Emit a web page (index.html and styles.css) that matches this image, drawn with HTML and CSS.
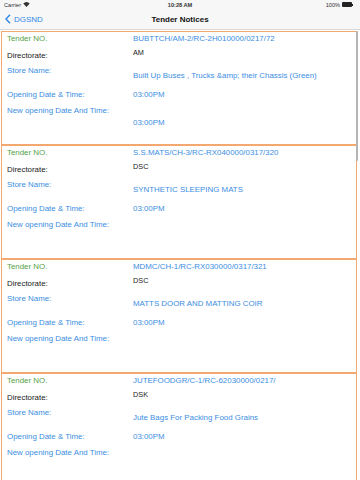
FILE: index.html
```html
<!DOCTYPE html>
<html>
<head>
    <meta http-equiv="Content-Type" content="text/html; charset=utf-8"/>
    <title>Tender Notices</title>
    <link rel="stylesheet" href="styles.css">
</head>
<body>
<div class="statusbar">
    <span class="carrier">Carrier
        <svg class="wifi" width="7" height="5" viewBox="0 0 14 10">
            <path d="M7 10 L0.5 3.2 A9.5 9.5 0 0 1 13.5 3.2 Z" fill="#333"/>
        </svg>
    </span>
    <span class="clock">10:28 AM</span>
    <span class="battery">100%
        <span class="batt-body"></span><span class="batt-tip"></span>
    </span>
</div>
<div class="navbar">
    <a class="back">
        <svg width="6" height="10" viewBox="0 0 6 10">
            <polyline points="5,0.8 1,5 5,9.2" fill="none" stroke="#2f86e8" stroke-width="1.4"/>
        </svg>
        DGSND
    </a>
    <span class="title">Tender Notices</span>
</div>

<div class="list">
    <div class="card">
        <div class="col labels">
            <div class="tno">Tender NO.</div>
            <div class="dir">Directorate:</div>
            <div class="store">Store Name:</div>
            <div class="open">Opening Date &amp; Time:</div>
            <div class="newopen">New opening Date And Time:</div>
        </div>
        <div class="col values">
            <div class="v-tno">BUBTTCH/AM-2/RC-2H010000/0217/72</div>
            <div class="v-dir">AM</div>
            <div class="v-store">Built Up Buses , Trucks &amp;amp; their Chassis (Green)</div>
            <div class="v-open">03:00PM</div>
            <div class="v-newopen">03:00PM</div>
        </div>
    </div>
    <div class="card">
        <div class="col labels">
            <div class="tno">Tender NO.</div>
            <div class="dir">Directorate:</div>
            <div class="store">Store Name:</div>
            <div class="open">Opening Date &amp; Time:</div>
            <div class="newopen">New opening Date And Time:</div>
        </div>
        <div class="col values">
            <div class="v-tno">S.S.MATS/CH-3/RC-RX040000/0317/320</div>
            <div class="v-dir">DSC</div>
            <div class="v-store">SYNTHETIC SLEEPING MATS</div>
            <div class="v-open">03:00PM</div>
        </div>
    </div>
    <div class="card">
        <div class="col labels">
            <div class="tno">Tender NO.</div>
            <div class="dir">Directorate:</div>
            <div class="store">Store Name:</div>
            <div class="open">Opening Date &amp; Time:</div>
            <div class="newopen">New opening Date And Time:</div>
        </div>
        <div class="col values">
            <div class="v-tno">MDMC/CH-1/RC-RX030000/0317/321</div>
            <div class="v-dir">DSC</div>
            <div class="v-store">MATTS DOOR AND MATTING COIR</div>
            <div class="v-open">03:00PM</div>
        </div>
    </div>
    <div class="card">
        <div class="col labels">
            <div class="tno">Tender NO.</div>
            <div class="dir">Directorate:</div>
            <div class="store">Store Name:</div>
            <div class="open">Opening Date &amp; Time:</div>
            <div class="newopen">New opening Date And Time:</div>
        </div>
        <div class="col values">
            <div class="v-tno">JUTEFOODGR/C-1/RC-62030000/0217/</div>
            <div class="v-dir">DSK</div>
            <div class="v-store">Jute Bags For Packing Food Grains</div>
            <div class="v-open">03:00PM</div>
        </div>
    </div>
    <div class="scroller"></div>
</div>
</body>
</html>
```

FILE: styles.css
```css
* {
    font-family: "Liberation Sans", Arial, sans-serif;
    box-sizing: border-box;
}

html, body {
    margin: 0;
    height: 480px;
    overflow: hidden;
    background: #fff;
}

/* status bar */
.statusbar {
    height: 9px;
    background: #f7f7f7;
    display: flex;
    align-items: center;
    justify-content: space-between;
    padding: 0 4px;
    font-size: 5.6px;
    color: #333;
    position: relative;
}

.carrier {
    display: flex;
    align-items: center;
    gap: 2px;
}

.clock {
    position: absolute;
    left: 0;
    right: 0;
    text-align: center;
    font-weight: bold;
}

.battery {
    display: flex;
    align-items: center;
    gap: 2px;
    padding-right: 3px;
}

.batt-body {
    width: 10px;
    height: 4.5px;
    background: #222;
    border-radius: 1px;
}

.batt-tip {
    width: 1px;
    height: 2px;
    background: #222;
    margin-left: -2px;
}

/* nav bar */
.navbar {
    height: 21px;
    background: #f7f7f7;
    border-bottom: 1px solid #d8d8d8;
    display: flex;
    align-items: center;
    position: relative;
    padding-left: 5px;
}

.back {
    display: flex;
    align-items: center;
    gap: 3px;
    color: #2f86e8;
    font-size: 8px;
}

.title {
    position: absolute;
    left: 0;
    right: 0;
    text-align: center;
    font-weight: bold;
    font-size: 8px;
    color: #111;
}

/* tender list */
.list {
    position: relative;
    padding: 1px 3px 0 1px;
}

.card {
    height: 114px;
    border: 1px solid #f2a86e;
    display: flex;
    font-size: 7.9px;
    line-height: 10px;
    white-space: nowrap;
}

.col {
    display: flex;
    flex-direction: column;
}

.labels {
    width: 131px;
    padding-left: 5px;
    color: #3b8ee2;
}

.values {
    color: #3b8ee2;
}

.tno { color: #55a347; margin-top: 2px; }
.dir { color: #222; margin-top: 7px; }
.store { margin-top: 5px; }
.open { margin-top: 14px; }
.newopen { margin-top: 6px; }

.v-tno { margin-top: 2px; }
.v-dir { color: #222; margin-top: 4px; font-size: 7.3px; }
.v-store { margin-top: 13px; }
.v-open { margin-top: 9px; }
.v-newopen { margin-top: 18px; }

.scroller {
    position: absolute;
    top: 1px;
    right: 2px;
    width: 2px;
    height: 130px;
    background: #b4b4b4;
    border-radius: 1px;
}
```
